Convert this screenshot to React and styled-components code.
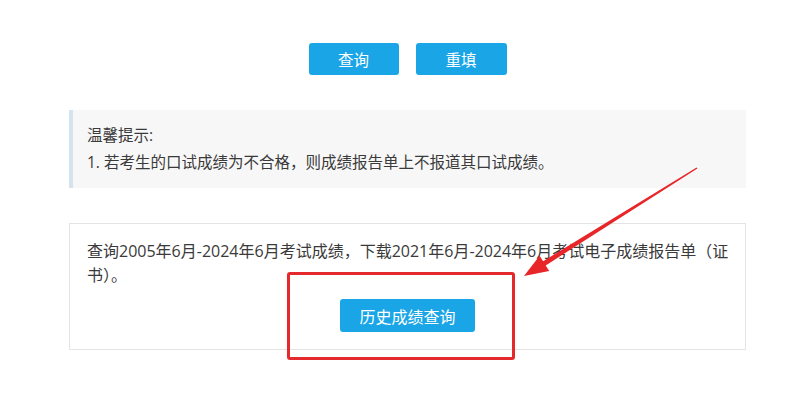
import React from "react";
import styled, { createGlobalStyle } from "styled-components";

const GlobalStyle = createGlobalStyle`
  html, body {
    margin: 0;
    padding: 0;
    background: #ffffff;
  }
  body {
    font-family: "Open Sans", "Noto Sans CJK SC", sans-serif;
    color: #3a3a3a;
  }
`;

const Page = styled.div`
  position: relative;
  width: 800px;
  height: 408px;
  overflow: hidden;
`;

const Content = styled.div`
  margin-left: 69px;
  width: 677px;
  padding-top: 43px;
`;

const ButtonRow = styled.div`
  display: flex;
  justify-content: center;
  gap: ${(p) => p.$gap || 0}px;
`;

const BlueButton = styled.button`
  box-sizing: border-box;
  width: ${(p) => p.$w}px;
  height: ${(p) => p.$h}px;
  margin-top: ${(p) => p.$mt || 0}px;
  border: none;
  border-radius: 3px;
  background: #1aa5e6;
  color: #ffffff;
  font-family: "Open Sans", "Noto Sans CJK SC", sans-serif;
  font-size: ${(p) => p.$fs}px;
  padding: 0;
  cursor: pointer;
`;

const Notice = styled.div`
  box-sizing: border-box;
  margin-top: 35px;
  height: 78px;
  background: #f7f7f8;
  border-left: 4px solid #d5e3ef;
  padding: 12px 14px;
  font-size: 15.5px;
  line-height: 27px;
  color: #3a3a3a;
`;

const NoticeLine = styled.div`
  white-space: nowrap;
`;

const Card = styled.div`
  box-sizing: border-box;
  margin-top: 35px;
  height: 127px;
  border: 1px solid #e4e4e4;
  padding: 15px 17px 17px 17px;
`;

const CardText = styled.p`
  margin: 0 -7px 0 0;
  font-size: 16px;
  line-height: 24px;
  color: #3a3a3a;
`;

const Highlight = styled.div`
  position: absolute;
  left: 287px;
  top: 272px;
  width: 228px;
  height: 88px;
  box-sizing: border-box;
  border: 3px solid #e4282b;
  border-radius: 3px;
  pointer-events: none;
`;

const ArrowLayer = styled.svg`
  position: absolute;
  left: 0;
  top: 0;
  width: 800px;
  height: 408px;
  pointer-events: none;
`;

export default function App() {
  return (
    <>
      <GlobalStyle />
      <Page>
        <Content>
          <ButtonRow $gap={17}>
            <BlueButton $w={90} $h={32} $fs={15.5}>查询</BlueButton>
            <BlueButton $w={91} $h={32} $fs={15.5}>重填</BlueButton>
          </ButtonRow>
          <Notice>
            <NoticeLine>温馨提示:</NoticeLine>
            <NoticeLine>1. 若考生的口试成绩为不合格，则成绩报告单上不报道其口试成绩。</NoticeLine>
          </Notice>
          <Card>
            <CardText>
              查询2005年6月-2024年6月考试成绩，下载2021年6月-2024年6月考试电子成绩报告单（证书）。
            </CardText>
            <ButtonRow>
              <BlueButton $w={135} $h={33} $fs={16} $mt={12}>历史成绩查询</BlueButton>
            </ButtonRow>
          </Card>
        </Content>
        <Highlight />
        <ArrowLayer viewBox="0 0 800 408">
          <polygon
            points="696.6,167.4 543.1,261.2 539.6,255.7 524,276 549.2,270.9 545.7,265.4 697.4,168.6"
            fill="#e8262a"
          />
        </ArrowLayer>
      </Page>
    </>
  );
}
